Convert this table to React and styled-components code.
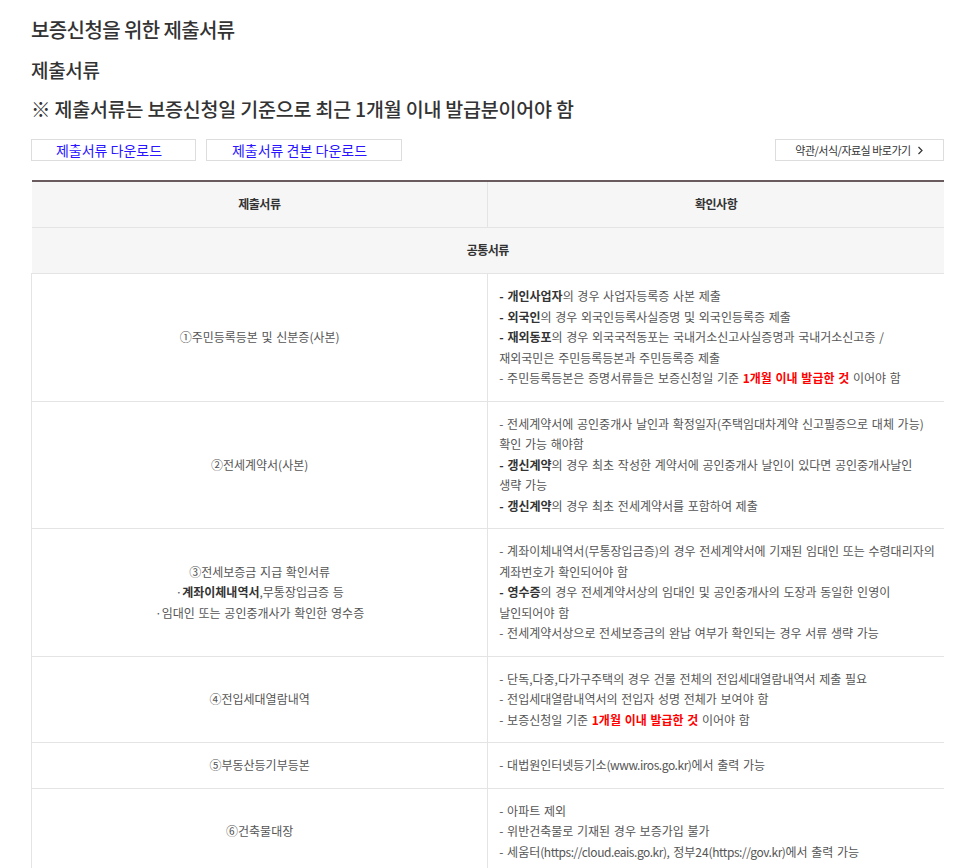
import React from 'react';
import styled, { createGlobalStyle } from 'styled-components';

const Global = createGlobalStyle`
  *{
    margin: 0;
    padding: 0;
    box-sizing: border-box;
  }
  body{
    background: #fff;
    font-family: "Noto Sans CJK KR", "Noto Sans", sans-serif;
    color: #555;
  }
`;

const Wrapper = styled.div`
  width: 944px;
  padding: 14px 0 0 31px;
`;

const Title = styled.h2`
  font-size: 20px;
  font-weight: 500;
  line-height: 32px;
  letter-spacing: -0.6px;
  color: #333;
`;

const SubTitle = styled.h3`
  font-size: 19px;
  font-weight: 500;
  line-height: 32px;
  letter-spacing: -0.3px;
  color: #333;
  margin-top: 8px;
`;

const Notice = styled.p`
  font-size: 19.5px;
  font-weight: 500;
  line-height: 32px;
  letter-spacing: -0.2px;
  color: #333;
  margin-top: 7px;
`;

const ButtonBar = styled.div`
  display: flex;
  align-items: center;
  gap: 10px;
  margin-top: 14px;
`;

const DownBtn = styled.a`
  display: flex;
  align-items: center;
  justify-content: center;
  width: ${(p) => p.$w}px;
  height: 22px;
  padding-right: 9px;
  border: 1px solid #ddd;
  font-size: 14px;
  color: #2a14ff;
  cursor: pointer;
`;

const LinkBtn = styled.a`
  margin-left: auto;
  display: flex;
  align-items: center;
  justify-content: center;
  gap: 5px;
  width: 169px;
  height: 22px;
  border: 1px solid #ddd;
  font-size: 11px;
  letter-spacing: -0.5px;
  color: #333;
  cursor: pointer;
`;

const Table = styled.table`
  width: 913px;
  table-layout: fixed;
  margin-top: 19px;
  border-collapse: collapse;
  border-top: 2px solid #6a5b5e;
  font-size: 12px;
  word-spacing: 1px;
  line-height: 20.5px;
`;

const Th = styled.th`
  background: #f6f6f6;
  color: #333;
  font-weight: 700;
  text-align: center;
  letter-spacing: -0.5px;
  word-spacing: 0;
  padding: 12px 10px ${(p) => (p.$section ? 13 : 12)}px;
  border-bottom: 1px solid #e4e4e4;
  border-left: ${(p) => (p.$divider ? '1px solid #e4e4e4' : 'none')};
`;

const NameCell = styled.td`
  text-align: center;
  vertical-align: middle;
  padding: 12px 10px;
  border-left: 1px solid #e4e4e4;
  border-bottom: 1px solid #e4e4e4;
  color: #555;
  b{
    color: #333;
    font-weight: 700;
  }
`;

const InfoCell = styled.td`
  text-align: left;
  vertical-align: middle;
  padding: 12px 0 12px 11px;
  border-left: 1px solid #e4e4e4;
  border-bottom: 1px solid #e4e4e4;
  color: #555;
  white-space: nowrap;
  b{
    color: #333;
    font-weight: 700;
  }
`;

const Red = styled.strong`
  color: #ff0000;
  font-weight: 700;
`;

const Url = styled.span`
  letter-spacing: -0.45px;
`;

const rows = [
  {
    name: [<>①주민등록등본 및 신분증(사본)</>],
    lines: [
      <><b>- 개인사업자</b>의 경우 사업자등록증 사본 제출</>,
      <><b>- 외국인</b>의 경우 외국인등록사실증명 및 외국인등록증 제출</>,
      <><b>- 재외동포</b>의 경우 외국국적동포는 국내거소신고사실증명과 국내거소신고증 /</>,
      <>재외국민은 주민등록등본과 주민등록증 제출</>,
      <>- 주민등록등본은 증명서류들은 보증신청일 기준 <Red>1개월 이내 발급한 것</Red> 이어야 함</>,
    ],
  },
  {
    name: [<>②전세계약서(사본)</>],
    lines: [
      <>- 전세계약서에 공인중개사 날인과 확정일자(주택임대차계약 신고필증으로 대체 가능)</>,
      <>확인 가능 해야함</>,
      <><b>- 갱신계약</b>의 경우 최초 작성한 계약서에 공인중개사 날인이 있다면 공인중개사날인</>,
      <>생략 가능</>,
      <><b>- 갱신계약</b>의 경우 최초 전세계약서를 포함하여 제출</>,
    ],
  },
  {
    name: [
      <>③전세보증금 지급 확인서류</>,
      <>·<b>계좌이체내역서</b>,무통장입금증 등</>,
      <>·임대인 또는 공인중개사가 확인한 영수증</>,
    ],
    lines: [
      <>- 계좌이체내역서(무통장입금증)의 경우 전세계약서에 기재된 임대인 또는 수령대리자의</>,
      <>계좌번호가 확인되어야 함</>,
      <><b>- 영수증</b>의 경우 전세계약서상의 임대인 및 공인중개사의 도장과 동일한 인영이</>,
      <>날인되어야 함</>,
      <>- 전세계약서상으로 전세보증금의 완납 여부가 확인되는 경우 서류 생략 가능</>,
    ],
  },
  {
    name: [<>④전입세대열람내역</>],
    lines: [
      <>- 단독,다중,다가구주택의 경우 건물 전체의 전입세대열람내역서 제출 필요</>,
      <>- 전입세대열람내역서의 전입자 성명 전체가 보여야 함</>,
      <>- 보증신청일 기준 <Red>1개월 이내 발급한 것</Red> 이어야 함</>,
    ],
  },
  {
    name: [<>⑤부동산등기부등본</>],
    lines: [<>- 대법원인터넷등기소<Url>(www.iros.go.kr)</Url>에서 출력 가능</>],
  },
  {
    name: [<>⑥건축물대장</>],
    lines: [
      <>- 아파트 제외</>,
      <>- 위반건축물로 기재된 경우 보증가입 불가</>,
      <>- 세움터<Url>(https://cloud.eais.go.kr),</Url> 정부24<Url>(https://gov.kr)</Url>에서 출력 가능</>,
    ],
  },
];

export default function App() {
  return (
    <Wrapper>
      <Global />
      <Title>보증신청을 위한 제출서류</Title>
      <SubTitle>제출서류</SubTitle>
      <Notice>※ 제출서류는 보증신청일 기준으로 최근 1개월 이내 발급분이어야 함</Notice>
      <ButtonBar>
        <DownBtn $w={165}>제출서류 다운로드</DownBtn>
        <DownBtn $w={196}>제출서류 견본 다운로드</DownBtn>
        <LinkBtn>
          약관/서식/자료실 바로가기
          <svg width="8" height="9" viewBox="0 0 8 9">
            <path d="M2.5 1 L6 4.5 L2.5 8" fill="none" stroke="#333" strokeWidth="1.2" />
          </svg>
        </LinkBtn>
      </ButtonBar>
      <Table>
        <colgroup>
          <col style={{ width: '50%' }} />
          <col style={{ width: '50%' }} />
        </colgroup>
        <thead>
          <tr>
            <Th>제출서류</Th>
            <Th $divider>확인사항</Th>
          </tr>
        </thead>
        <tbody>
          <tr>
            <Th colSpan={2} $section>공통서류</Th>
          </tr>
          {rows.map((r, i) => (
            <tr key={i}>
              <NameCell>
                {r.name.map((n, j) => (
                  <div key={j}>{n}</div>
                ))}
              </NameCell>
              <InfoCell>
                {r.lines.map((l, j) => (
                  <div key={j}>{l}</div>
                ))}
              </InfoCell>
            </tr>
          ))}
        </tbody>
      </Table>
    </Wrapper>
  );
}
